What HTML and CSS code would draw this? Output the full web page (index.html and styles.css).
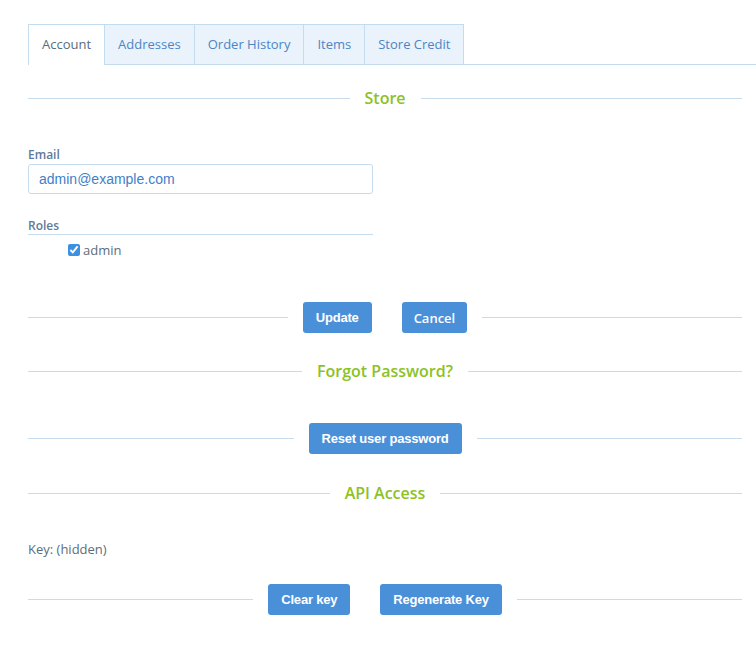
FILE: index.html
```html
<html>
  <head>
    <title>Account</title>
    <link rel="stylesheet" href="styles.css">
  </head>
  <body>
    <div class="page">
      <ul class="tabs">
        <li class="tab active">Account</li>
        <li class="tab">Addresses</li>
        <li class="tab">Order History</li>
        <li class="tab">Items</li>
        <li class="tab">Store Credit</li>
      </ul>

      <h3 class="divider store-title">Store</h3>

      <div class="field email-field">
        <label class="field-label" for="email">Email</label>
        <input class="text-input" id="email" type="text" value="admin@example.com">
      </div>

      <div class="field roles-field">
        <div class="field-label roles-label">Roles</div>
        <label class="role"><input type="checkbox" checked> admin</label>
      </div>

      <div class="divider actions update-actions">
        <button class="btn">Update</button>
        <button class="btn btn-cancel">Cancel</button>
      </div>

      <h3 class="divider forgot-title">Forgot Password?</h3>

      <div class="divider actions reset-actions">
        <button class="btn">Reset user password</button>
      </div>

      <h3 class="divider api-title">API Access</h3>

      <p class="key-info">Key: (hidden)</p>

      <div class="divider actions key-actions">
        <button class="btn">Clear key</button>
        <button class="btn">Regenerate Key</button>
      </div>
    </div>
  </body>
</html>
```

FILE: styles.css
```css
body {
  margin: 0;
  background: #fff;
  font-family: "Open Sans", sans-serif;
  color: #5a6d80;
}

.page {
  padding: 24px 14px 40px 28px;
}

/* tabs */
.tabs {
  display: flex;
  margin: 0 -14px 0 0;
  padding: 0;
  list-style: none;
  height: 40px;
  border-bottom: 1px solid #c5dcef;
}

.tab {
  line-height: 39px;
  height: 39px;
  padding: 0 13px;
  font-size: 13px;
  color: #4a86c5;
  background: #eaf2fb;
  border: 1px solid #c5dcef;
  border-bottom: none;
  margin-left: -1px;
}

.tab:first-child {
  margin-left: 0;
}

.tab.active {
  background: #fff;
  color: #5a6d80;
  height: 40px;
  margin-bottom: -1px;
}

/* dividers with centered content */
.divider {
  display: flex;
  align-items: center;
  gap: 15px;
  margin: 0;
}

.divider::before,
.divider::after {
  content: "";
  flex: 1;
  height: 1px;
  background: #c9dcee;
}

h3.divider {
  font-size: 16px;
  font-weight: 600;
  line-height: 20px;
  color: #8dc21f;
}

.store-title {
  margin-top: 23px !important;
}

.forgot-title {
  margin-top: 28px !important;
}

.api-title {
  margin-top: 29px !important;
}

/* form */
.field {
  width: 345px;
}

.field-label {
  display: block;
  font-size: 12px;
  font-weight: 600;
  line-height: 16px;
  color: #5f7a98;
}

.email-field {
  margin-top: 39px;
}

.text-input {
  display: block;
  box-sizing: border-box;
  width: 345px;
  height: 30px;
  margin-top: 1px;
  padding: 0 10px;
  border: 1px solid #c5dcef;
  border-radius: 3px;
  font-family: "Liberation Sans", Arial, sans-serif;
  font-size: 14px;
  color: #3f80c8;
  outline: none;
}

.roles-field {
  margin-top: 23px;
}

.roles-label {
  line-height: 17px;
  border-bottom: 1px solid #c5dcef;
}

.role {
  display: flex;
  align-items: center;
  gap: 3px;
  margin-top: 7px;
  padding-left: 40px;
  line-height: 16px;
  font-size: 13px;
  color: #5a6d80;
}

.role input {
  margin: 0;
  width: 12px;
  height: 12px;
  accent-color: #3d8fe0;
}

/* buttons */
.actions {
  gap: 15px;
}

.btn {
  height: 31px;
  padding: 0 13px;
  border: none;
  border-radius: 3px;
  background: #4a90d9;
  color: #fff;
  font-family: "Liberation Sans", Arial, sans-serif;
  font-size: 13px;
  font-weight: bold;
  letter-spacing: -0.2px;
}

.btn + .btn {
  margin-left: 15px;
}

.btn-cancel {
  font-family: "Open Sans", sans-serif;
  font-weight: 600;
  letter-spacing: 0;
  padding: 0 12px;
}

.update-actions {
  margin-top: 44px;
}

.reset-actions {
  margin-top: 42px;
}

.key-info {
  margin: 38px 0 0;
  font-size: 13px;
  line-height: 16px;
}

.key-actions {
  margin-top: 27px;
}
```
